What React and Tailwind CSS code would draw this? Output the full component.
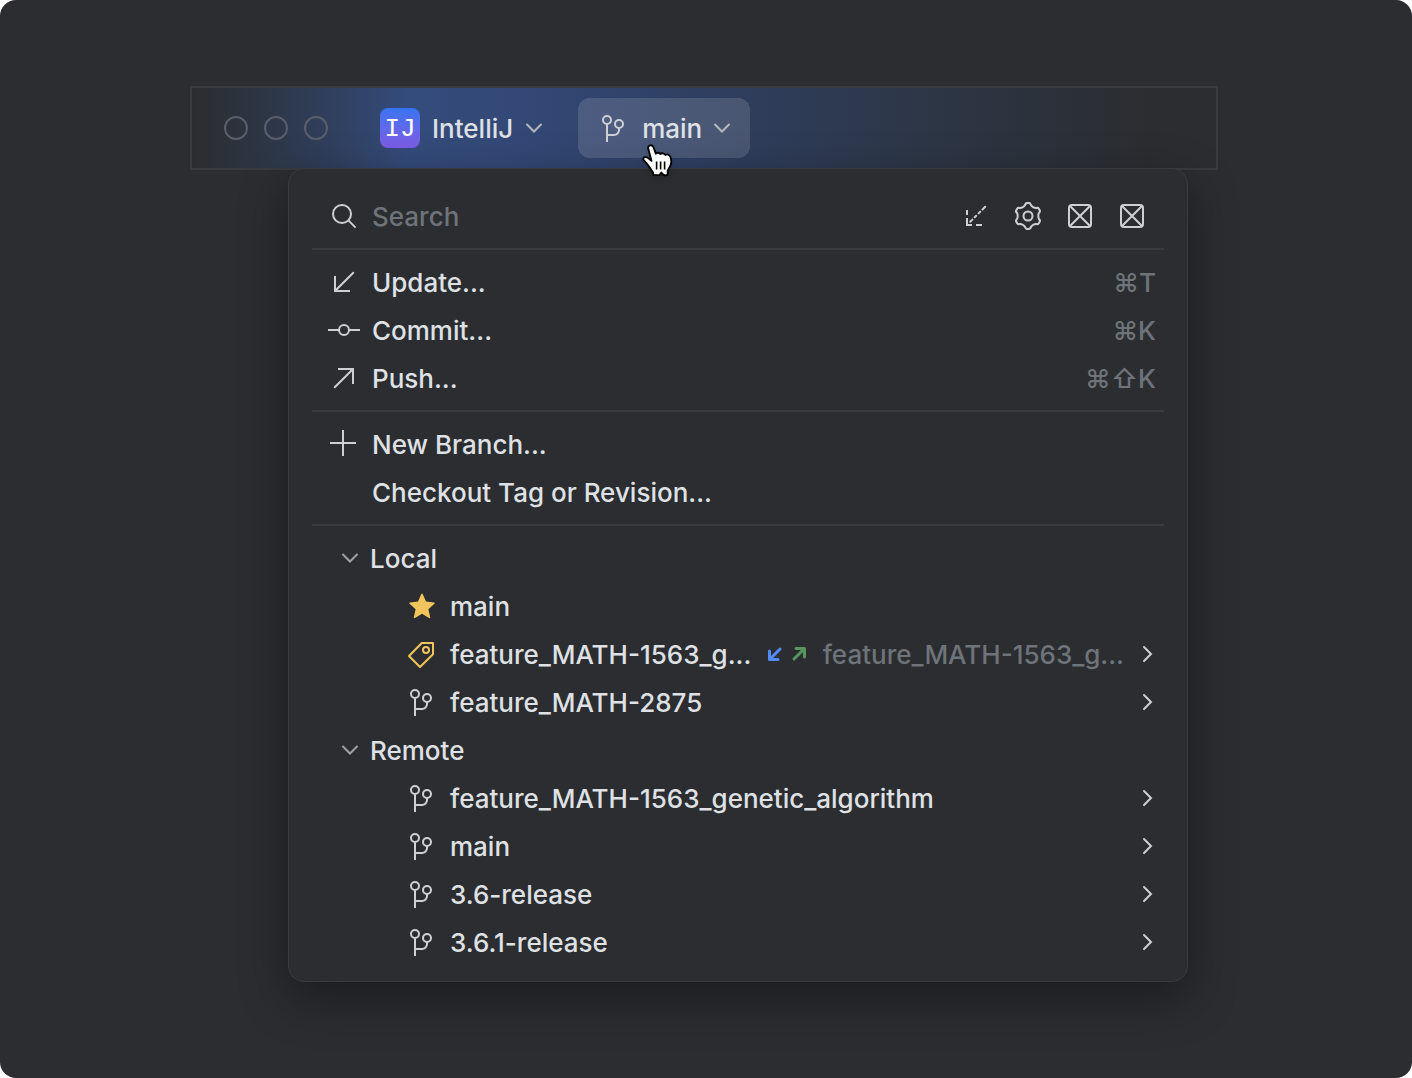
import React from "react";

function Icon({ children, className = "text-[#CED0D6]" }) {
  return (
    <svg viewBox="0 0 16 16" fill="none" stroke="currentColor" aria-hidden="true" className={`size-8 shrink-0 ${className}`}>
      {children}
    </svg>
  );
}

const SearchIcon = () => (
  <Icon>
    <circle cx="7" cy="7" r="4.5" />
    <path d="M10.2 10.2 13.8 13.8" />
  </Icon>
);

const IncomingIcon = () => (
  <Icon>
    <path d="M3.500 5v2.500M3.500 9v3.500H6M8 12.500h3" />
    <path strokeLinecap="round" d="M5.100 10.900l1.100-1.100M7.300 8.700l.8-.8M9.300 6.700l.8-.8M11.200 4.800l1.400-1.400" />
  </Icon>
);

const GearIcon = () => (
  <Icon>
    <circle cx="8" cy="8" r="2.25" />
    <g transform="translate(8 8)" strokeLinecap="round">
      {[0, 60, 120, 180, 240, 300].map((angle) => (
        <path
          key={angle}
          transform={`rotate(${angle})`}
          d="M-1.300-5.800Q-1.100-6.500-.6-6.500H.6Q1.100-6.500 1.300-5.800C1.650-4.750 3.290-3.810 4.370-4.030"
        />
      ))}
    </g>
  </Icon>
);

const PlaceholderIcon = () => (
  <Icon>
    <rect x="2.5" y="2.5" width="11" height="11" rx="1.5" />
    <path d="m3 3 10 10M13 3 3 13" />
  </Icon>
);

const UpdateIcon = () => (
  <Icon>
    <path d="M3.500 5v7.500H11M3.600 12.400 12.900 3.100" />
  </Icon>
);

const CommitIcon = () => (
  <Icon>
    <circle cx="8" cy="8" r="2.5" />
    <path d="M0 8h5.500M10.500 8H16" />
  </Icon>
);

const PushIcon = () => (
  <Icon>
    <path d="M5 3.500h7.500V11M12.400 3.600 3.100 12.900" />
  </Icon>
);

const PlusIcon = () => (
  <Icon>
    <path d="M7.500 1v13M1 7.500h13" />
  </Icon>
);

const BranchIcon = () => (
  <Icon>
    <circle cx="4.5" cy="4" r="2" />
    <circle cx="10.5" cy="6" r="2" />
    <path d="M4.500 6v9M10.500 8v1a2.500 2.500 0 0 1-2.500 2.500H4.500" />
  </Icon>
);

const StarIcon = () => (
  <Icon className="text-[#F2C55C]">
    <path
      fill="currentColor"
      stroke="none"
      d="M8 1.800c.2 0 .3.1.4.3l1.600 3.700 4 .4c.4 0 .5.500.2.700l-3 2.700.9 4c.1.300-.3.600-.6.400L8 11.900 4.500 14c-.3.200-.7-.1-.6-.4l.9-4-3-2.700c-.3-.2-.2-.7.2-.7l4-.4 1.600-3.700c.1-.2.2-.3.4-.3Z"
    />
  </Icon>
);

const TagIcon = () => (
  <Icon className="text-[#F2C55C]">
    <path strokeLinejoin="round" d="M7.900 2.500h5.600v5.600L7 14.500 1.500 9z" />
    <circle cx="10" cy="6" r="1.5" />
  </Icon>
);

const ChevronDown = ({ className }) => (
  <Icon className={className}>
    <path strokeLinecap="round" d="M4.500 6.250 8 9.750l3.500-3.500" />
  </Icon>
);

const ChevronRight = () => (
  <Icon>
    <path strokeLinecap="round" d="M6 4.500 9.500 8 6 11.500" />
  </Icon>
);

const SyncIcon = () => (
  <svg viewBox="0 0 40 16" fill="none" strokeWidth="3" strokeLinecap="round" strokeLinejoin="round" aria-hidden="true" className="h-4 w-10 shrink-0">
    <path stroke="#548AF7" d="M2.500 5v8.500H11M2.800 13.200 13 3" />
    <path stroke="#57965C" d="M29 2.500h8.500V11M37.200 2.800 27 13" />
  </svg>
);

const Label = ({ children, className = "" }) => <span className={`pt-[2px] ${className}`}>{children}</span>;

function MenuRow({ icon, label, shortcut }) {
  return (
    <button type="button" className="flex h-12 w-full items-center gap-3 pr-2 pl-4 text-left">
      {icon ?? <span className="w-8 shrink-0" />}
      <Label className="flex-1">{label}</Label>
      {shortcut && <kbd className="pt-[2px] font-[Inter,sans-serif] text-[#6F737A]">{shortcut}</kbd>}
    </button>
  );
}

function GroupRow({ label }) {
  return (
    <button type="button" aria-expanded="true" className="flex h-12 w-full items-center gap-1 pl-[22px] text-left">
      <ChevronDown className="text-[#9DA0A8]" />
      <Label>{label}</Label>
    </button>
  );
}

function BranchRow({ icon, label, tracking, submenu = true }) {
  return (
    <button type="button" className="flex h-12 w-full items-center pl-[94px] text-left">
      {icon ?? <BranchIcon />}
      <Label className="ml-3">{label}</Label>
      {tracking && (
        <span className="ml-auto flex items-center gap-4 pr-2 text-[#6F737A]">
          <SyncIcon />
          <Label>{tracking}</Label>
        </span>
      )}
      {submenu && <span className={tracking ? "" : "ml-auto"}><ChevronRight /></span>}
    </button>
  );
}

const Separator = () => <hr className="my-2 h-[2px] border-0 bg-[#393B40]" />;

function TitleBar() {
  return (
    <header className="flex h-[84px] items-center border-2 border-[#393B40] bg-[linear-gradient(90deg,#2B2D30_0%,#2D3644_7%,#30405F_14%,#344C7C_21%,#334876_32%,#2F3F61_50%,#2D3748_70%,#2B2D30_94%)] pl-8">
      <div className="flex gap-4">
        <span className="size-6 rounded-full border-2 border-[#5A5D6B]" />
        <span className="size-6 rounded-full border-2 border-[#5A5D6B]" />
        <span className="size-6 rounded-full border-2 border-[#5A5D6B]" />
      </div>
      <button type="button" className="ml-[52px] flex items-center">
        <span className="flex size-10 items-center justify-center rounded-lg bg-linear-to-b from-[#3574F0] to-[#7B5CE5] font-['Liberation_Mono',monospace] text-[26px] text-white">
          <Label>IJ</Label>
        </span>
        <Label className="ml-3">IntelliJ</Label>
        <ChevronDown className="ml-[5px] text-[#B4B8BF]" />
      </button>
      <button type="button" className="ml-7 flex h-15 items-center rounded-xl bg-white/13 pr-3 pl-5">
        <BranchIcon />
        <Label className="ml-3">main</Label>
        <ChevronDown className="ml-1 text-[#B4B8BF]" />
      </button>
    </header>
  );
}

function HandCursor() {
  return (
    <svg viewBox="0 0 32 34" aria-hidden="true" className="absolute top-[143px] left-[641px] z-20 h-[34px] w-8 drop-shadow-md">
      <path
        fill="#fff"
        stroke="#000"
        strokeWidth="1.8"
        strokeLinejoin="round"
        d="M9.300 2.300C11 2 12 2.900 12.600 4.500L14.800 10.700C15.800 9.400 18.500 9.400 19.300 11C20.500 9.800 23.500 10 24.300 12C25.800 11 28.300 11.400 29.300 13.600C30.300 16 30.500 19 29.800 21.500C29.200 24 27 26 26.600 28L26.800 31.500C25.400 32.500 23.800 32.500 22.600 31.900L20.300 29.500L18.300 32.200H12.600C12.300 29.500 11.300 27.700 9.700 25.800C7.500 23.300 6.500 20.800 4.300 18.800C2.500 17.300 1.700 16 2.500 14.900C3.600 13.600 6 14 7.500 15.300L10.500 17.800L7.200 5.500C6.800 3.900 7.700 2.600 9.300 2.300Z"
      />
      <path stroke="#000" strokeWidth="1.6" d="M15.600 18.500v8M19.600 18.500v8M23.600 18.500v8" />
    </svg>
  );
}

function BranchesPopup() {
  return (
    <section
      aria-label="Branches"
      className="relative z-10 -mt-[2px] mr-[30px] ml-[98px] rounded-2xl border border-[#393B40] bg-[#2B2D30] px-[23px] pt-[23px] pb-[15px] shadow-[0_16px_48px_rgba(0,0,0,0.4)]"
    >
      <div className="flex h-12 items-center pr-4 pl-4">
        <label htmlFor="branch-search" aria-label="Search branches">
          <SearchIcon />
        </label>
        <input id="branch-search" type="text" placeholder="Search" className="ml-3 min-w-0 flex-1 bg-transparent pt-[2px] outline-none placeholder:text-[#6F737A]" />
        <div className="flex gap-5">
          <button type="button" aria-label="Fetch"><IncomingIcon /></button>
          <button type="button" aria-label="Settings"><GearIcon /></button>
          <button type="button" aria-label="Action one"><PlaceholderIcon /></button>
          <button type="button" aria-label="Action two"><PlaceholderIcon /></button>
        </div>
      </div>
      <Separator />
      <MenuRow icon={<UpdateIcon />} label="Update..." shortcut="⌘T" />
      <MenuRow icon={<CommitIcon />} label="Commit..." shortcut="⌘K" />
      <MenuRow icon={<PushIcon />} label="Push..." shortcut="⌘⇧K" />
      <Separator />
      <MenuRow icon={<PlusIcon />} label="New Branch..." />
      <MenuRow label="Checkout Tag or Revision..." />
      <Separator />
      <GroupRow label="Local" />
      <BranchRow icon={<StarIcon />} label="main" submenu={false} />
      <BranchRow icon={<TagIcon />} label="feature_MATH-1563_g..." tracking="feature_MATH-1563_g..." />
      <BranchRow label="feature_MATH-2875" />
      <GroupRow label="Remote" />
      <BranchRow label="feature_MATH-1563_genetic_algorithm" />
      <BranchRow label="main" />
      <BranchRow label="3.6-release" />
      <BranchRow label="3.6.1-release" />
    </section>
  );
}

export default function App() {
  return (
    <div className="min-h-screen bg-white">
      <main className="relative min-h-screen rounded-2xl bg-[#2B2D30] pt-[86px] pr-[194px] pb-24 pl-[190px] font-[Inter,sans-serif] text-[26px] leading-8 font-medium text-[#DFE1E5]">
        <TitleBar />
        <BranchesPopup />
        <HandCursor />
      </main>
    </div>
  );
}
